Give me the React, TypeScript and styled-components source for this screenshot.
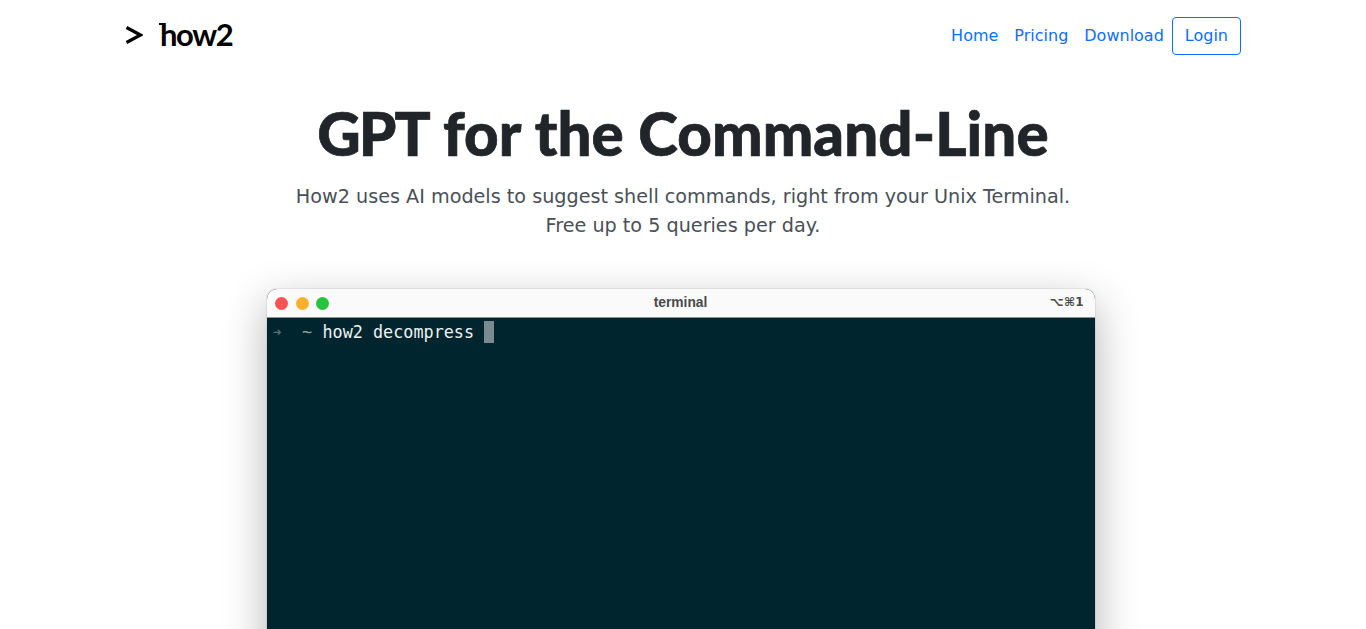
import React from 'react';
import styled, { createGlobalStyle } from 'styled-components';

const GlobalStyle = createGlobalStyle`
  html, body {
    margin: 0;
    height: 100%;
    overflow: hidden;
    background: #fff;
    font-family: 'DejaVu Sans', sans-serif;
  }
  * { box-sizing: border-box; }
`;

const App: React.FC = () => {
  return (
    <Page>
      <GlobalStyle />
      <Navbar>
        <Brand href="#">
          <Chevron viewBox="0 0 18 20" aria-hidden="true">
            <path d="M1.5 3.5 L15.5 11 L1.5 18.5" fill="none" stroke="#000" strokeWidth="3.2" />
          </Chevron>
          <BrandName>how2</BrandName>
        </Brand>
        <NavLinks>
          <NavLink href="#">Home</NavLink>
          <NavLink href="#">Pricing</NavLink>
          <NavLink href="#">Download</NavLink>
          <LoginButton href="#">Login</LoginButton>
        </NavLinks>
      </Navbar>
      <Hero>
        <Title><TightWord>GPT</TightWord> for the Command-Line</Title>
        <Lead>
          How2 uses AI models to suggest shell commands, right from your Unix Terminal.
          <br />
          Free up to 5 queries per day.
        </Lead>
      </Hero>
      <Terminal>
        <TitleBar>
          <Lights>
            <Light $color="#fb5351" />
            <Light $color="#fdb02c" />
            <Light $color="#27c33f" />
          </Lights>
          <WindowName>terminal</WindowName>
          <Shortcut>⌥⌘1</Shortcut>
        </TitleBar>
        <Screen>
          <Arrow>➜</Arrow>
          <Tilde>~</Tilde>
          <Command>how2 decompress</Command>
          <Cursor />
        </Screen>
      </Terminal>
    </Page>
  );
};

export default App;

// Styled Components
const Page = styled.div`
  width: 1140px;
  height: 629px;
  margin: 0 auto;
  padding: 0 12px;
  overflow: hidden;
`;

const Navbar = styled.nav`
  display: flex;
  align-items: center;
  justify-content: space-between;
  height: 71px;
`;

const Brand = styled.a`
  display: flex;
  align-items: center;
  gap: 17px;
  height: 34px;
  margin-top: -3px;
  text-decoration: none;
  color: #000;
`;

const Chevron = styled.svg`
  width: 18px;
  height: 20px;
`;

const BrandName = styled.span`
  position: relative;
  font-family: 'Lato', sans-serif;
  font-size: 31px;
  font-weight: 700;
  line-height: 34px;
  letter-spacing: -1.4px;

  /* small flag on the top of the h */
  &::before {
    content: '';
    position: absolute;
    left: -1px;
    top: 6px;
    width: 4px;
    height: 2px;
    background: #000;
  }
`;

const NavLinks = styled.div`
  display: flex;
  align-items: center;
`;

const NavLink = styled.a`
  padding: 8px;
  font-size: 16px;
  line-height: 24px;
  color: #0d6efd;
  text-decoration: none;
`;

const LoginButton = styled.a`
  padding: 6px 12px;
  font-size: 16px;
  line-height: 24px;
  color: #0d6efd;
  text-decoration: none;
  border: 1px solid #0d6efd;
  border-radius: 4px;
`;

const Hero = styled.header`
  text-align: center;
`;

const Title = styled.h1`
  margin: 0;
  padding-top: 26px;
  font-family: 'Lato', sans-serif;
  font-size: 60px;
  font-weight: 900;
  line-height: 72px;
  letter-spacing: 0.1px;
  -webkit-text-stroke: 0.7px #212529;
  color: #212529;
`;

const TightWord = styled.span`
  letter-spacing: -2px;
`;

const Lead = styled.p`
  margin: 13px 0 0;
  font-size: 19.2px;
  font-weight: 400;
  line-height: 29px;
  color: #495057;
`;

const Terminal = styled.section`
  width: 828px;
  height: 400px;
  margin: 49px 0 0 142px;
  border-radius: 10px 10px 0 0;
  overflow: hidden;
  background: #00252e;
  box-shadow: 0 0 0 1px rgba(0, 0, 0, 0.06), 0 14px 44px rgba(0, 0, 0, 0.3);
`;

const TitleBar = styled.div`
  display: grid;
  grid-template-columns: 1fr auto 1fr;
  align-items: center;
  height: 29px;
  padding: 0 11px 0 8px;
  background: #fafafa;
  border-bottom: 1px solid #8f9192;
`;

const Lights = styled.div`
  display: flex;
  gap: 7.5px;
`;

const Light = styled.span<{ $color: string }>`
  width: 13px;
  height: 13px;
  border-radius: 50%;
  background: ${p => p.$color};
`;

const WindowName = styled.span`
  padding: 0 0 2px 2px;
  font-family: 'Liberation Sans', sans-serif;
  font-size: 13.8px;
  font-weight: 700;
  color: #4a4a4a;
`;

const Shortcut = styled.span`
  justify-self: end;
  padding-bottom: 2px;
  font-size: 12px;
  font-weight: 700;
  letter-spacing: 0.3px;
  color: #4a4a4a;
`;

const Screen = styled.div`
  display: flex;
  align-items: center;
  height: 28px;
  padding-left: 6px;
  font-family: 'DejaVu Sans Mono', monospace;
  font-size: 16.8px;
  color: #eef2f2;
`;

const Arrow = styled.span`
  width: 29px;
  font-size: 14px;
  color: #56706f;
`;

const Tilde = styled.span`
  width: 20px;
  color: #93a1a1;
`;

const Command = styled.span`
  margin-left: 0.5px;
  white-space: pre;
`;

const Cursor = styled.span`
  width: 10px;
  height: 22px;
  margin-left: 10px;
  background: #7a8b8f;
`;
